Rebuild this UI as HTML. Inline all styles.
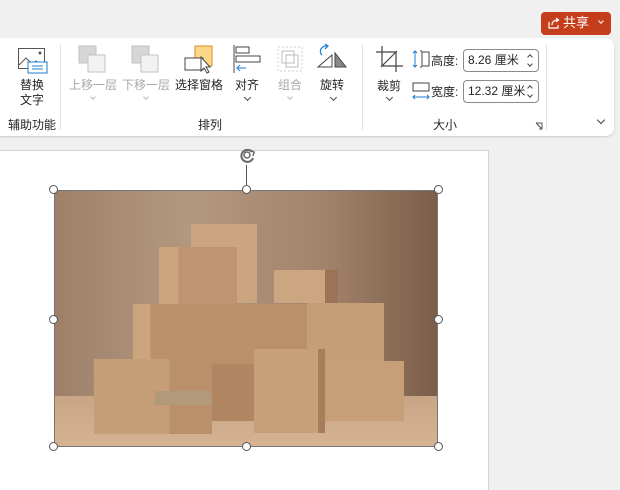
<!DOCTYPE html>
<html><head><meta charset="utf-8"><style>
*{margin:0;padding:0;box-sizing:border-box}
body{width:620px;height:490px;overflow:hidden;background:#f0f0f0;font-family:"Liberation Sans","Noto Sans CJK SC",sans-serif;font-size:12px;color:#252525;position:relative}
.a{position:absolute}
.t{position:absolute;white-space:nowrap;font-size:12px;line-height:14px}
.g{color:#a8a8a8}
.sep{position:absolute;width:1px;background:#e1e1e1}
.chev{position:absolute;width:5px;height:5px;border-right:1px solid #444;border-bottom:1px solid #444;transform:rotate(45deg)}
.up{position:absolute;width:4px;height:4px;border-left:1px solid #444;border-top:1px solid #444;transform:rotate(45deg)}
.inp{position:absolute;background:#fff;border:1px solid #8a8a8a;border-radius:4px;width:76px;height:23px;font-size:12px;line-height:21px;padding-left:4px}
.h{position:absolute;width:9px;height:9px;border:1.5px solid #555;border-radius:50%;background:#fff}
.box{position:absolute}
</style></head><body>
<div class="a" style="left:541px;top:12px;width:70px;height:23px;background:#c43e1c;border-radius:4px"></div>
<svg class="a" style="left:547px;top:16px" width="14" height="14" viewBox="0 0 14 14"><path d="M2 6v6h9V9" fill="none" stroke="#fff" stroke-width="1.2"/><path d="M5 9c0-3 2-5 6-5M9 2l2.5 2L9 6" fill="none" stroke="#fff" stroke-width="1.2"/></svg>
<div class="t" style="left:563px;top:16px;color:#fff;font-size:13px">共享</div>
<div class="chev" style="left:599px;top:19px;border-color:#fff;width:4px;height:4px"></div>
<div class="a" style="left:-10px;top:38px;width:624px;height:98px;background:#fff;border-radius:8px;box-shadow:0 1px 2px rgba(0,0,0,.15)"></div>
<div class="sep" style="left:60px;top:44px;height:86px"></div>
<div class="sep" style="left:362px;top:44px;height:86px"></div>
<div class="sep" style="left:546px;top:44px;height:86px"></div>
<svg class="a" style="left:17px;top:47px" width="32" height="28" viewBox="0 0 32 28"><rect x="1.5" y="1.5" width="26" height="20" fill="none" stroke="#555"/><path d="M2 18l7-7 6 6 4-3 8 6" fill="none" stroke="#555"/><circle cx="23" cy="6" r="1.5" fill="#555"/><rect x="11" y="15" width="19" height="11" fill="#fff" stroke="#1e7fd0"/><path d="M15 19h11M15 22h11" stroke="#1e7fd0"/></svg>
<div class="t" style="left:20px;top:78px">替换</div>
<div class="t" style="left:20px;top:93px">文字</div>
<div class="t" style="left:8px;top:118px">辅助功能</div>
<svg class="a" style="left:78px;top:45px" width="30" height="28"><rect x="1" y="1" width="17" height="17" fill="#d6d6d6" stroke="#c2c2c2"/><rect x="10" y="10" width="17" height="17" fill="#f2f2f2" stroke="#c2c2c2"/></svg>
<div class="t g" style="left:69px;top:78px">上移一层</div>
<div class="chev" style="left:91px;top:95px;border-color:#bbb;width:4px;height:4px"></div>
<svg class="a" style="left:131px;top:45px" width="30" height="28"><rect x="1" y="1" width="17" height="17" fill="#d6d6d6" stroke="#c2c2c2"/><rect x="10" y="10" width="17" height="17" fill="#f2f2f2" stroke="#c2c2c2"/></svg>
<div class="t g" style="left:122px;top:78px">下移一层</div>
<div class="chev" style="left:144px;top:95px;border-color:#bbb;width:4px;height:4px"></div>
<svg class="a" style="left:184px;top:45px" width="32" height="30"><rect x="11" y="1" width="17" height="20" fill="#fcd88a" stroke="#e08a1e"/><rect x="1" y="13" width="18" height="12" fill="#fff" stroke="#444"/><path d="M17 12l0 14 3-3 3 5 2-1-3-5 4 0z" fill="#fff" stroke="#444"/></svg>
<div class="t" style="left:175px;top:78px">选择窗格</div>
<svg class="a" style="left:232px;top:44px" width="30" height="30"><path d="M2 1v28" stroke="#444"/><rect x="4" y="3" width="13" height="6" fill="none" stroke="#444"/><rect x="4" y="12" width="24" height="6" fill="none" stroke="#444"/><path d="M14 24H5M8 21l-3 3 3 3" fill="none" stroke="#1e7fd0"/></svg>
<div class="t" style="left:235px;top:78px">对齐</div>
<div class="chev" style="left:245px;top:95px"></div>
<svg class="a" style="left:276px;top:45px" width="30" height="28"><rect x="2" y="2" width="24" height="24" fill="none" stroke="#ccc" stroke-dasharray="2 2"/><rect x="6" y="6" width="12" height="12" fill="none" stroke="#bbb"/><rect x="10" y="10" width="12" height="12" fill="none" stroke="#bbb"/></svg>
<div class="t g" style="left:278px;top:78px">组合</div>
<div class="chev" style="left:288px;top:95px;border-color:#bbb;width:4px;height:4px"></div>
<svg class="a" style="left:316px;top:43px" width="32" height="30"><path d="M6 12c-4-4 0-10 6-9M9 1l3 2-3 3" fill="none" stroke="#1e7fd0" stroke-width="1.3"/><path d="M2 24l14-12v12z" fill="none" stroke="#444"/><path d="M19 24V10l11 14z" fill="#888" stroke="#444"/></svg>
<div class="t" style="left:320px;top:78px">旋转</div>
<div class="chev" style="left:331px;top:95px"></div>
<div class="t" style="left:198px;top:118px">排列</div>
<svg class="a" style="left:375px;top:45px" width="30" height="28"><path d="M7 1v20h21M1 7h20v20M6 22L22 6" fill="none" stroke="#444" stroke-width="1.2"/></svg>
<div class="t" style="left:377px;top:79px">裁剪</div>
<div class="chev" style="left:387px;top:95px"></div>
<svg class="a" style="left:412px;top:50px" width="20" height="20"><path d="M3 1v16M1 3l2-2 2 2M1 15l2 2 2-2" fill="none" stroke="#1e7fd0"/><path d="M8 1h2M8 17h2" stroke="#444"/><rect x="10" y="2" width="7" height="14" fill="none" stroke="#444"/></svg>
<div class="t" style="left:431px;top:54px">高度:</div>
<div class="inp" style="left:463px;top:49px">8.26 厘米</div>
<div class="up" style="left:528px;top:55px"></div>
<div class="chev" style="left:528px;top:62px;width:4px;height:4px"></div>
<svg class="a" style="left:412px;top:81px" width="20" height="22"><rect x="1" y="2" width="16" height="8" fill="none" stroke="#444"/><path d="M1 16h16M3 14l-2 2 2 2M15 14l2 2-2 2" fill="none" stroke="#1e7fd0"/></svg>
<div class="t" style="left:431px;top:85px">宽度:</div>
<div class="inp" style="left:463px;top:80px">12.32 厘米</div>
<div class="up" style="left:528px;top:86px"></div>
<div class="chev" style="left:528px;top:93px;width:4px;height:4px"></div>
<div class="t" style="left:433px;top:118px">大小</div>
<svg class="a" style="left:535px;top:122px" width="9" height="9"><path d="M1 1h6v6M1 1l6 6M4 7h3V4" fill="none" stroke="#555"/></svg>
<div class="chev" style="left:598px;top:117px;width:6px;height:6px"></div>
<div class="a" style="left:0;top:150px;width:489px;height:340px;background:#fff;border-right:1px solid #d4d4d4;border-top:1px solid #d4d4d4"></div>
<div class="a" style="left:54px;top:190px;width:384px;height:257px;overflow:hidden;background:linear-gradient(90deg,#9e8069 0%,#b39880 35%,#a3836b 70%,#7b5e4a 100%);border:1px solid #777">
 <div class="box" style="left:0;top:205px;width:384px;height:52px;background:linear-gradient(180deg,#c7a585,#d6b493)"></div>
 <div class="box" style="left:136px;top:33px;width:66px;height:79px;background:#cba57f"></div>
 <div class="box" style="left:104px;top:56px;width:78px;height:60px;background:linear-gradient(90deg,#cca47e 0 25%,#be9570 25%)"></div>
 <div class="box" style="left:219px;top:79px;width:64px;height:33px;background:linear-gradient(90deg,#cca680 0 80%,#9a7454 80%)"></div>
 <div class="box" style="left:78px;top:113px;width:174px;height:65px;background:linear-gradient(90deg,#cca47e 0 10%,#ba906b 10%)"></div>
 <div class="box" style="left:252px;top:112px;width:77px;height:63px;background:#c59d77"></div>
 <div class="box" style="left:157px;top:173px;width:42px;height:57px;background:#b08562"></div>
 <div class="box" style="left:270px;top:170px;width:79px;height:60px;background:#c69e78"></div>
 <div class="box" style="left:39px;top:168px;width:118px;height:75px;background:linear-gradient(90deg,#c59d77 0 64%,#b99069 64%)"></div>
 <div class="box" style="left:100px;top:200px;width:57px;height:14px;background:#b3997c"></div>
 <div class="box" style="left:199px;top:158px;width:71px;height:84px;background:linear-gradient(90deg,#c7a07a 0 90%,#a77e5b 90%)"></div>
</div>
<div class="a" style="left:246px;top:165px;width:1px;height:25px;background:#555"></div>
<svg class="a" style="left:237px;top:146px" width="22" height="20"><path d="M15 6a6 6 0 1 0 1 6" fill="none" stroke="#666" stroke-width="2"/><circle cx="10" cy="9" r="3" fill="none" stroke="#666" stroke-width="1.5"/><path d="M13 4l4 2-1 4" fill="none" stroke="#666" stroke-width="1.5"/></svg>
<div class="h" style="left:49px;top:185px"></div>
<div class="h" style="left:242px;top:185px"></div>
<div class="h" style="left:434px;top:185px"></div>
<div class="h" style="left:49px;top:315px"></div>
<div class="h" style="left:434px;top:315px"></div>
<div class="h" style="left:49px;top:442px"></div>
<div class="h" style="left:242px;top:442px"></div>
<div class="h" style="left:434px;top:442px"></div>
</body></html>
